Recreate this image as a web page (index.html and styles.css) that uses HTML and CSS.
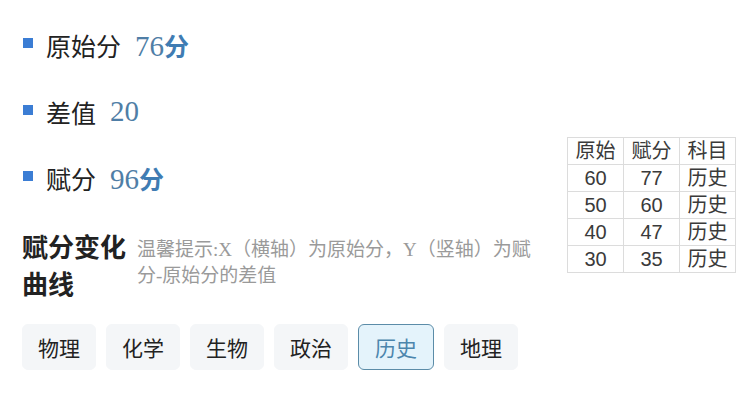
FILE: index.html
```html
<!DOCTYPE html>
<html lang="zh-CN">
<head>
    <meta charset="UTF-8">
    <meta name="viewport" content="width=device-width, initial-scale=1.0">
    <title>赋分</title>
    <link rel="stylesheet" href="styles.css">
</head>
<body>
    <div class="page">
        <div class="main">
            <div class="left">
                <div class="stat">
                    <span class="dot"></span>
                    <span class="label">原始分</span>
                    <span class="value">76<b>分</b></span>
                </div>
                <div class="stat">
                    <span class="dot"></span>
                    <span class="label">差值</span>
                    <span class="value">20</span>
                </div>
                <div class="stat">
                    <span class="dot"></span>
                    <span class="label">赋分</span>
                    <span class="value">96<b>分</b></span>
                </div>

                <div class="curve">
                    <h2 class="curve-title">赋分变化<br>曲线</h2>
                    <p class="hint">温馨提示:X（横轴）为原始分，Y（竖轴）为赋分-原始分的差值</p>
                </div>
            </div>

            <table class="score-table">
                <tr><th>原始</th><th>赋分</th><th>科目</th></tr>
                <tr><td>60</td><td>77</td><td>历史</td></tr>
                <tr><td>50</td><td>60</td><td>历史</td></tr>
                <tr><td>40</td><td>47</td><td>历史</td></tr>
                <tr><td>30</td><td>35</td><td>历史</td></tr>
            </table>
        </div>

        <div class="subjects">
            <button type="button" class="subject">物理</button>
            <button type="button" class="subject">化学</button>
            <button type="button" class="subject">生物</button>
            <button type="button" class="subject">政治</button>
            <button type="button" class="subject active">历史</button>
            <button type="button" class="subject">地理</button>
        </div>
    </div>
</body>
</html>
```

FILE: styles.css
```css
body {
    margin: 0;
    background-color: #fff;
    font-family: "Noto Sans CJK SC", sans-serif;
    color: #222;
}

.page {
    padding: 12px 20px 0 22px;
}

.main {
    display: flex;
    justify-content: space-between;
    align-items: flex-start;
}

.left {
    flex: 1;
    min-width: 0;
}

.stat {
    display: flex;
    align-items: center;
    height: 66.5px;
}

.dot {
    width: 10px;
    height: 10px;
    background-color: #3b7dd4;
    margin: 0 13px 4px 1px;
}

.label {
    font-size: 25px;
    color: #222;
}

.value {
    margin-left: 14px;
    font-family: "Liberation Serif", "Noto Sans CJK SC", serif;
    font-size: 29px;
    color: #4f7ea6;
}

.value b {
    font-family: "Noto Sans CJK SC", sans-serif;
    font-size: 25px;
    font-weight: bold;
    color: #3f7cb3;
}

.curve {
    display: flex;
    align-items: flex-start;
    margin-top: 15px;
}

.curve-title {
    margin: 0;
    font-size: 26px;
    line-height: 37px;
    font-weight: bold;
    color: #222;
    white-space: nowrap;
}

.hint {
    margin: 10px 0 0 11px;
    width: 400px;
    font-family: "Liberation Serif", "Noto Sans CJK SC", serif;
    font-size: 19px;
    line-height: 26px;
    color: #9a9a9a;
}

.score-table {
    margin-top: 125px;
    border-collapse: collapse;
    font-family: "Liberation Sans", "Noto Sans CJK SC", sans-serif;
    font-size: 20px;
    color: #3a3a3a;
}

.score-table th,
.score-table td {
    border: 1px solid #dcdcdc;
    width: 55px;
    height: 26px;
    padding: 0;
    text-align: center;
    font-weight: normal;
    line-height: 26px;
}

.subjects {
    display: flex;
    gap: 10px;
    margin-top: 23px;
}

.subject {
    width: 74px;
    height: 46px;
    padding: 0;
    border: 1px solid #f4f6f8;
    border-radius: 6px;
    background-color: #f4f6f8;
    font-family: "Noto Sans CJK SC", sans-serif;
    font-size: 21px;
    color: #222;
    cursor: pointer;
}

.subject.active {
    width: 76px;
    background-color: #e4f3fb;
    border-color: #5b8ca8;
    color: #4c86ad;
}
```
